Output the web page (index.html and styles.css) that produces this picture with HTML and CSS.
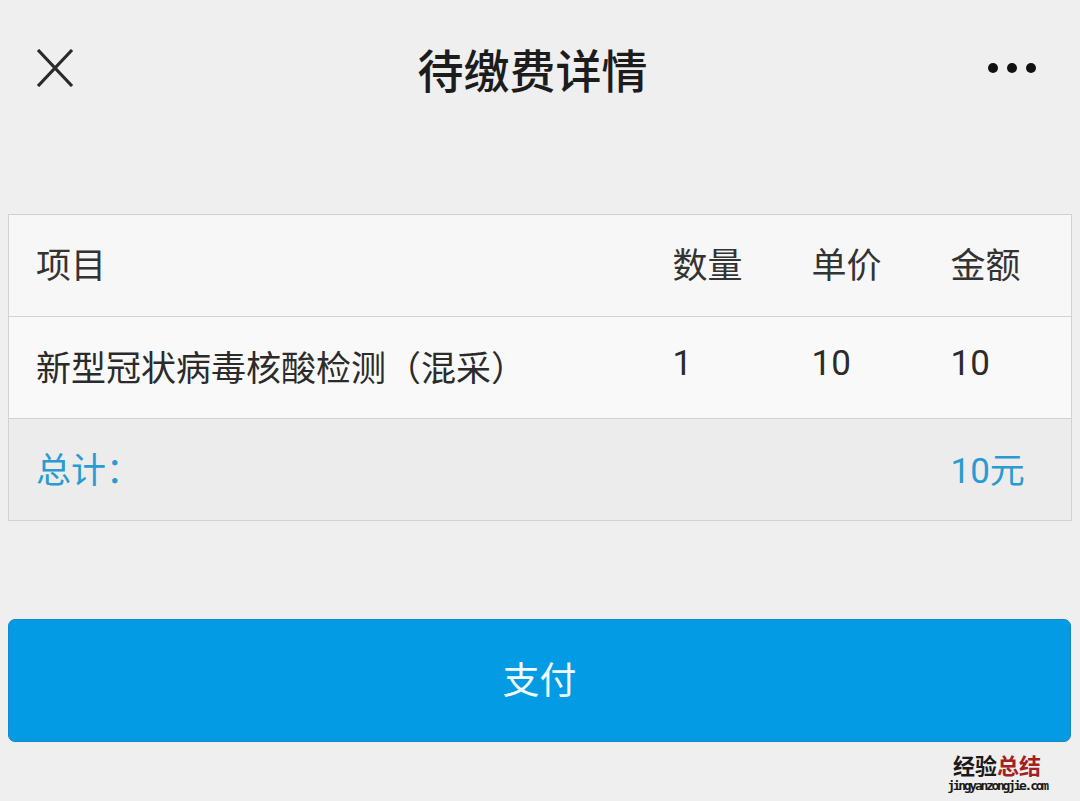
FILE: index.html
```html
<!DOCTYPE html>
<html lang="zh-CN">
<head>
<meta charset="utf-8">
<title>待缴费详情</title>
<link rel="stylesheet" href="styles.css">
</head>
<body>
<div class="page">
  <header class="topbar">
    <div class="close">
      <svg width="38" height="38" viewBox="0 0 38 38"><path d="M2 1 L36 37 M36 1 L2 37" stroke="#2a2a2a" stroke-width="3.2" fill="none"/></svg>
    </div>
    <h1 class="title">待缴费详情</h1>
    <div class="more">
      <svg width="50" height="14" viewBox="0 0 50 14"><circle cx="6" cy="7" r="5" fill="#111"/><circle cx="25" cy="7" r="5" fill="#111"/><circle cx="44" cy="7" r="5" fill="#111"/></svg>
    </div>
  </header>

  <table class="bill">
    <colgroup>
      <col class="c-item"><col class="c-num"><col class="c-num"><col class="c-amt">
    </colgroup>
    <tr class="head">
      <td>项目</td><td>数量</td><td>单价</td><td>金额</td>
    </tr>
    <tr class="line">
      <td class="name">新型冠状病毒核酸检测（混采）</td><td class="n">1</td><td class="n">10</td><td class="n">10</td>
    </tr>
    <tr class="total">
      <td>总计：</td><td></td><td></td><td>10元</td>
    </tr>
  </table>

  <button class="pay">支付</button>

  <div class="mark">
    <div class="mark-cn"><span class="dark">经验</span><span class="red">总结</span></div>
    <div class="mark-url">jingyanzongjie.com</div>
  </div>
</div>
</body>
</html>
```

FILE: styles.css
```css
html, body {
  margin: 0;
  padding: 0;
  background: #efefef;
}
body {
  font-family: Roboto, "Noto Sans CJK SC", sans-serif;
  color: #2b2b2b;
}
.page {
  width: 1080px;
  height: 801px;
  padding: 0 9px 0 8px;
  box-sizing: border-box;
  overflow: hidden;
}
.topbar {
  height: 140px;
  display: flex;
  align-items: center;
  justify-content: space-between;
  position: relative;
}
.close {
  width: 38px;
  height: 38px;
  margin-left: 28px;
  margin-top: -4px;
  display: flex;
}
.more {
  margin-right: 34px;
  margin-top: -4px;
  display: flex;
}
.title {
  position: absolute;
  left: 0;
  right: 0;
  top: 0;
  bottom: 0;
  margin: 0;
  display: flex;
  align-items: center;
  justify-content: center;
  font-family: "Noto Sans CJK SC", sans-serif;
  font-weight: 500;
  font-size: 46px;
  color: #1c1c1c;
  padding-right: 14px;
  padding-bottom: 4px;
  pointer-events: none;
}
.bill {
  margin-top: 74px;
  width: 1063px;
  border-collapse: collapse;
  border: 1px solid #d2d2d2;
  font-size: 35px;
  table-layout: fixed;
}
.c-item { width: 636px; }
.c-num { width: 139px; }
.c-amt { width: 149px; }
.bill td {
  height: 102px;
  padding: 0 0 0 27px;
  box-sizing: border-box;
  border-top: 1px solid #d2d2d2;
  vertical-align: middle;
  white-space: nowrap;
  line-height: 1.2;
}
.bill td + td { padding-left: 28px; }
.head td {
  background: #f7f7f7;
  color: #333;
  padding-top: 3px;
}
.line td {
  background: #f9f9f9;
  color: #2b2b2b;
}
.line td.name { padding-top: 4px; }
.line td.n { padding-bottom: 8px; font-size: 35px; }
.total td {
  background: #ececec;
  color: #2a9bd0;
  padding-top: 4px;
}
.pay {
  display: block;
  margin-top: 98px;
  width: 1063px;
  height: 123px;
  border: 1px solid #1787c6;
  border-radius: 7px;
  background: #049be5;
  color: #f4fbff;
  font-family: "Noto Sans CJK SC", sans-serif;
  font-size: 37px;
  padding: 0 0 5px 0;
  cursor: pointer;
}
.mark {
  margin-top: 11px;
  margin-left: auto;
  margin-right: 24px;
  width: 100px;
  display: flex;
  flex-direction: column;
  align-items: center;
  gap: 3px;
}
.mark-cn {
  font-family: "Noto Sans CJK SC", sans-serif;
  font-weight: 700;
  font-size: 22px;
  line-height: 22px;
  white-space: nowrap;
}
.mark-cn .dark { color: #1a1a1a; }
.mark-cn .red { color: #a42020; }
.mark-url {
  font-family: "DejaVu Sans Mono", monospace;
  font-size: 13px;
  line-height: 16px;
  color: #1a1a1a;
  font-weight: 700;
  letter-spacing: -2.3px;
  white-space: nowrap;
}
```
